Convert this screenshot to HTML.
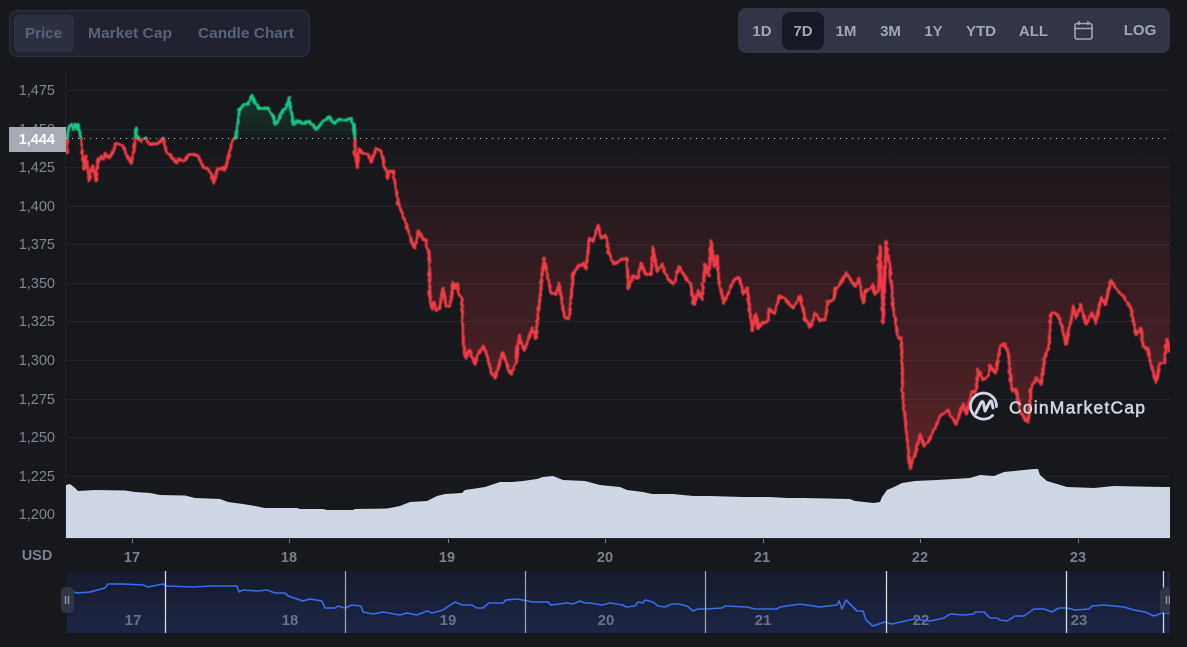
<!DOCTYPE html>
<html><head><meta charset="utf-8"><style>
html,body{margin:0;padding:0;background:#17181b;width:1187px;height:647px;overflow:hidden}
svg{display:block}
text{font-family:"Liberation Sans",sans-serif}
.y{font-size:14.5px;fill:#808594;text-anchor:end}
.x{font-size:14.5px;font-weight:bold;fill:#7b7f91;text-anchor:middle}
.n{font-size:15px;font-weight:bold;fill:#6b7287;text-anchor:middle}
.t{font-size:15px;font-weight:bold;fill:#58627a}
.r{font-size:15px;font-weight:bold;fill:#a1a7bb;text-anchor:middle}
</style></head><body>
<svg width="1187" height="647" viewBox="0 0 1187 647" xmlns="http://www.w3.org/2000/svg">
<defs>
<linearGradient id="rg" gradientUnits="userSpaceOnUse" x1="0" y1="138" x2="0" y2="467"><stop offset="0" stop-color="#ea3943" stop-opacity="0"/><stop offset="1" stop-color="#ea3943" stop-opacity=".33"/></linearGradient>
<linearGradient id="gg" gradientUnits="userSpaceOnUse" x1="0" y1="95" x2="0" y2="138"><stop offset="0" stop-color="#16c784" stop-opacity=".2"/><stop offset="1" stop-color="#16c784" stop-opacity=".02"/></linearGradient>
<linearGradient id="ng" x1="0" y1="0" x2="0" y2="1"><stop offset="0" stop-color="#171b2b"/><stop offset="1" stop-color="#1c2543"/></linearGradient>
<clipPath id="below"><rect x="66" y="138.5" width="1104" height="400"/></clipPath>
<clipPath id="above"><rect x="66" y="60" width="1104" height="78.5"/></clipPath>
<clipPath id="navc"><rect x="55" y="571" width="1115" height="70"/></clipPath>
<filter id="jit" filterUnits="userSpaceOnUse" x="50" y="60" width="1140" height="430"><feTurbulence type="turbulence" baseFrequency="0.16" numOctaves="1" seed="4" result="n"/><feDisplacementMap in="SourceGraphic" in2="n" scale="3" xChannelSelector="R" yChannelSelector="G" result="d"/><feGaussianBlur in="d" stdDeviation="0.45"/></filter>
<polyline id="pl" points="66,153 66.5,130 68,125 70,123 72,128 74,123 76,128 77,123 79,135 80,137 82,157 83,168 85,155 88,180 91,165 93,170 95,180 97,160 100,155 103,158 105,153 108,157 112,150 115,142 117,143 122,145 125,153 130,162 133,147 135,127 137,137 140,140 145,137 148,143 153,143 158,142 162,137 165,150 170,155 175,162 178,158 183,160 187,154 192,153 197,155 202,166 207,168 210,172 213,182 216,168 222,167 223,170 228,155 230,143 235,137 238,110 243,103 247,103 251,95 255,102 258,107 267,107 272,115 274,123 277,122 280,112 285,107 288,97 292,123 297,120 302,123 308,120 315,128 320,122 328,116 333,122 338,118 343,120 350,117 353,123 354,150 356,166 358,148 363,153 367,153 370,161 375,147 380,150 383,163 387,177 388,170 392,170 395,187 397,202 400,210 405,222 408,233 412,245 414,247 417,230 422,238 425,240 428,252 429,300 431,308 433,302 435,309 438,308 442,287 445,305 449,305 452,282 454,288 456,283 458,295 461,297 462,343 465,357 468,349 472,358 474,363 477,353 482,345 485,352 490,370 494,377 497,367 501,352 504,357 507,368 510,373 515,362 518,335 523,350 527,340 531,327 535,337 538,302 543,257 546,272 550,292 555,293 558,282 563,315 568,318 572,273 577,265 582,263 585,268 588,237 592,240 597,224 600,237 605,235 608,253 613,263 622,258 626,258 627,288 632,275 637,277 640,262 644,273 650,273 652,247 656,270 661,263 667,278 673,283 678,265 685,278 689,282 693,303 697,290 701,298 704,263 708,275 710,240 713,265 716,255 718,283 723,302 728,290 733,278 738,276 742,293 746,287 751,330 755,313 757,327 762,322 767,320 768,308 774,313 778,295 783,297 792,307 799,295 804,318 810,326 814,312 819,320 824,318 827,300 832,299 835,288 840,282 845,272 850,280 854,285 858,278 862,302 865,290 869,288 872,283 874,293 877,290 879,246 882,322 885,241 889,267 892,305 897,337 900,337 902,400 905,427 909,467 915,450 919,433 923,445 927,440 934,427 940,413 943,412 947,410 955,423 962,403 965,413 970,393 975,390 977,368 982,379 987,375 989,365 995,372 999,345 1004,343 1007,352 1011,390 1015,388 1019,410 1027,422 1030,388 1035,377 1040,383 1044,355 1048,345 1050,313 1054,312 1059,318 1065,343 1070,318 1072,305 1075,317 1080,304 1085,323 1091,312 1095,322 1100,296 1104,303 1110,279 1115,288 1122,295 1130,308 1135,333 1140,328 1142,345 1147,348 1150,365 1155,381 1159,362 1163,362 1166,338 1169,351"/>
</defs>

<!-- top left tabs -->
<rect x="9.5" y="10.5" width="300" height="46" rx="8" fill="#20232f" stroke="#2c3040"/>
<rect x="14" y="15" width="60" height="37" rx="6" fill="#2c3040"/>
<text class="t" x="25" y="38" textLength="37" lengthAdjust="spacingAndGlyphs">Price</text>
<text class="t" x="88" y="38" textLength="84" lengthAdjust="spacingAndGlyphs">Market Cap</text>
<text class="t" x="198" y="38" textLength="96" lengthAdjust="spacingAndGlyphs">Candle Chart</text>

<!-- top right -->
<rect x="738" y="8" width="432" height="45" rx="8" fill="#323546"/>
<rect x="782" y="12" width="42" height="38" rx="8" fill="#171924"/>
<text class="r" x="762" y="36">1D</text>
<text class="r" x="803" y="36">7D</text>
<text class="r" x="846" y="36">1M</text>
<text class="r" x="890.5" y="36">3M</text>
<text class="r" x="933.5" y="36">1Y</text>
<text class="r" x="981" y="36">YTD</text>
<text class="r" x="1033.5" y="36">ALL</text>
<text class="r" x="1140" y="35">LOG</text>
<g fill="none" stroke="#a1a7bb" stroke-width="1.6" stroke-linecap="round">
<rect x="1075" y="23.5" width="17" height="15.5" rx="2"/>
<path d="M1075 28.5H1092M1079 21.5V24.5M1088 21.5V24.5"/>
</g>

<!-- grid -->
<g stroke="#232333" stroke-width="1">
<path d="M66 90.5H1170M66 129.5H1170M66 167.5H1170M66 206.5H1170M66 244.5H1170M66 283.5H1170M66 321.5H1170M66 360.5H1170M66 399.5H1170M66 437.5H1170M66 476.5H1170"/>
<path d="M65.5 71V538"/>
</g>

<!-- y labels -->
<text class="y" x="55" y="95">1,475</text>
<text class="y" x="55" y="134">1,450</text>
<text class="y" x="55" y="172">1,425</text>
<text class="y" x="55" y="211">1,400</text>
<text class="y" x="55" y="249">1,375</text>
<text class="y" x="55" y="288">1,350</text>
<text class="y" x="55" y="326">1,325</text>
<text class="y" x="55" y="365">1,300</text>
<text class="y" x="55" y="404">1,275</text>
<text class="y" x="55" y="442">1,250</text>
<text class="y" x="55" y="481">1,225</text>
<text class="y" x="55" y="519">1,200</text>

<!-- area fills -->
<polygon clip-path="url(#below)" fill="url(#rg)" points="66,138.5 66,153 66.5,130 82,157 83,168 85,155 88,180 91,165 95,180 97,160 100,155 105,153 112,150 115,142 122,145 125,153 130,162 133,147 135,127 137,137 145,137 148,143 158,142 162,137 165,150 175,162 187,154 197,155 202,166 213,182 216,168 222,167 228,155 230,143 235,137 354,150 356,166 358,148 367,153 370,161 375,147 380,150 387,177 392,170 395,187 397,202 400,210 405,222 408,233 412,245 414,247 417,230 422,238 428,252 429,300 431,308 435,309 438,308 442,287 445,305 449,305 452,282 456,283 461,297 462,343 465,357 468,349 474,363 482,345 490,370 494,377 501,352 507,368 510,373 515,362 518,335 523,350 531,327 535,337 538,302 543,257 546,272 550,292 555,293 558,282 563,315 568,318 572,273 582,263 585,268 588,237 597,224 600,237 605,235 608,253 613,263 622,258 626,258 627,288 637,277 640,262 644,273 650,273 652,247 656,270 661,263 673,283 678,265 689,282 693,303 701,298 704,263 708,275 710,240 713,265 716,255 718,283 723,302 733,278 738,276 742,293 746,287 751,330 755,313 757,327 767,320 768,308 774,313 778,295 792,307 799,295 804,318 810,326 814,312 824,318 827,300 835,288 845,272 854,285 858,278 862,302 865,290 872,283 877,290 879,246 882,322 885,241 889,267 892,305 897,337 900,337 902,400 905,427 909,467 915,450 919,433 927,440 934,427 940,413 947,410 955,423 962,403 965,413 970,393 975,390 977,368 982,379 989,365 995,372 999,345 1004,343 1007,352 1011,390 1015,388 1019,410 1027,422 1030,388 1035,377 1040,383 1044,355 1048,345 1050,313 1059,318 1065,343 1072,305 1080,304 1085,323 1091,312 1095,322 1100,296 1104,303 1110,279 1122,295 1130,308 1135,333 1142,345 1150,365 1155,381 1159,362 1163,362 1166,338 1169,351 1170,351 1170,138.5"/>
<polygon clip-path="url(#above)" fill="url(#gg)" points="235,138.5 238,110 243,103 247,103 251,95 258,107 267,107 274,123 280,112 285,107 288,97 292,123 302,123 315,128 328,116 338,118 350,117 353,123 354,138.5"/>

<!-- volume -->
<polygon fill="#cfd6e4" points="66,538 66,485 70,484 75,488 78,491 95,490 125,490.5 135,492 150,493 160,495 185,495.5 195,498 220,499 228,502 243,504 255,506 265,508 297,508 300,509 323,509 327,510 353,510 355,509 387,508.5 400,506 410,502 427,501 437,496 445,494 462,493 465,490 485,487 500,482 512,482 523,481 537,479 543,477 553,476 563,480 585,481 600,485 620,487 627,490 643,492 652,494 673,494 693,496 710,496 743,497 770,497 787,498 804,498 850,499 855,501 874,503 880,502 882,497 887,490 894,487 902,483 915,481 937,480 970,478 980,475 994,476 1004,472 1034,469 1038,469 1040,475 1047,481 1067,487 1094,488 1114,486 1165,487 1170,487 1170,538"/>

<!-- price line -->
<g clip-path="url(#below)"><use href="#pl" filter="url(#jit)" fill="none" stroke="#f03a46" stroke-width="3.1" stroke-linejoin="round"/></g>
<g clip-path="url(#above)"><use href="#pl" filter="url(#jit)" fill="none" stroke="#16c784" stroke-width="3.1" stroke-linejoin="round"/></g>

<!-- baseline -->
<path d="M66 138.5H1170" stroke="#c9ccd3" stroke-width="1" stroke-dasharray="1 5"/>
<rect x="9" y="127" width="57" height="25" fill="#a6abb5"/>
<text x="55" y="144" font-size="14.5" font-weight="bold" fill="#fff" text-anchor="end">1,444</text>

<!-- watermark -->
<g fill="none" stroke="#cfd6e4" stroke-width="2.8" stroke-linecap="round" stroke-linejoin="round">
<path d="M992.5 415.5A13 13 0 1 1 996.5 406.5"/>
<path d="M976 413L981 402.5Q982.5 400.5 983.5 403L985 411L990 401.5Q991.5 400 992 403L993 408" stroke-width="3"/>
</g>
<text x="1009" y="413.5" font-size="17.5" fill="#cfd6e4" stroke="#cfd6e4" stroke-width=".55" textLength="136">CoinMarketCap</text>

<!-- x axis -->
<path d="M66 538.5H1170" stroke="#232333"/>
<path d="M132.5 539V543M289.5 539V543M448.5 539V543M605.5 539V543M763.5 539V543M920.5 539V543M1078.5 539V543" stroke="#7b7f91"/>
<text x="37" y="560" font-size="14.5" font-weight="bold" fill="#7b7f91" text-anchor="middle">USD</text>
<text class="x" x="132" y="562">17</text>
<text class="x" x="289" y="562">18</text>
<text class="x" x="447" y="562">19</text>
<text class="x" x="605" y="562">20</text>
<text class="x" x="762" y="562">21</text>
<text class="x" x="920" y="562">22</text>
<text class="x" x="1078" y="562">23</text>

<!-- navigator -->
<rect x="67" y="571" width="1100" height="62" fill="url(#ng)"/>
<rect x="1167" y="571" width="3" height="62" fill="#1c2543"/>
<text class="n" x="133" y="625">17</text>
<text class="n" x="290" y="625">18</text>
<text class="n" x="448" y="625">19</text>
<text class="n" x="606" y="625">20</text>
<text class="n" x="763" y="625">21</text>
<text class="n" x="921" y="625">22</text>
<text class="n" x="1079" y="625">23</text>
<polyline fill="none" stroke="#3a6cf0" stroke-width="1.6" stroke-linejoin="round" points="74,592 77,593 90,592 105,588 108,584 123,584 143,585 148,587 163,584 167,586 193,587 210,586 237,586 239,592 243,590 258,591 267,590 275,593 285,593 288,596 303,601 310,599 322,601 325,608 335,608 338,606 345,608 352,605 361,606 363,612 373,614 383,612 400,615 407,613 417,615 427,611 432,613 443,610 455,602 462,605 472,605 477,608 483,608 489,603 503,603 506,600 517,599 533,602 548,602 551,605 567,603 573,604 580,601 585,603 590,603 602,605 610,603 623,605 626,607 635,606 638,602 643,603 645,600 653,602 658,606 665,607 672,604 678,604 687,606 693,611 698,609 707,609 722,608 725,606 747,607 755,609 777,609 780,607 800,604 820,607 837,605 839,601 842,609 846,600 857,611 863,611 866,620 873,626 885,622 892,624 914,619 930,621 944,618 950,614 964,615 974,614 975,612 984,612 990,618 997,618 1000,620 1007,621 1015,616 1024,616 1034,609 1044,609 1052,612 1059,608 1067,608 1075,610 1089,609 1092,606 1104,605 1124,607 1134,610 1145,612 1154,616 1162,613 1170,613"/>
<path d="M165.5 571V633M1066.5 571V633M1163.5 571V633M886.5 571V633" stroke="#d5d9e2" stroke-width="1.3"/>
<path d="M345.5 571V633M525.5 571V633M705.5 571V633" stroke="#9ba1b0" stroke-width="1.3"/>
<g clip-path="url(#navc)">
<rect x="61" y="587" width="13" height="26" rx="5" fill="#323546"/>
<rect x="1160" y="587" width="13" height="26" rx="5" fill="#323546"/>
<path d="M65.5 596V604M68.5 596V604M1166.5 596V604M1169.5 596V604" stroke="#8f95a6" stroke-width="1.4"/>
</g>
</svg>
</body></html>
